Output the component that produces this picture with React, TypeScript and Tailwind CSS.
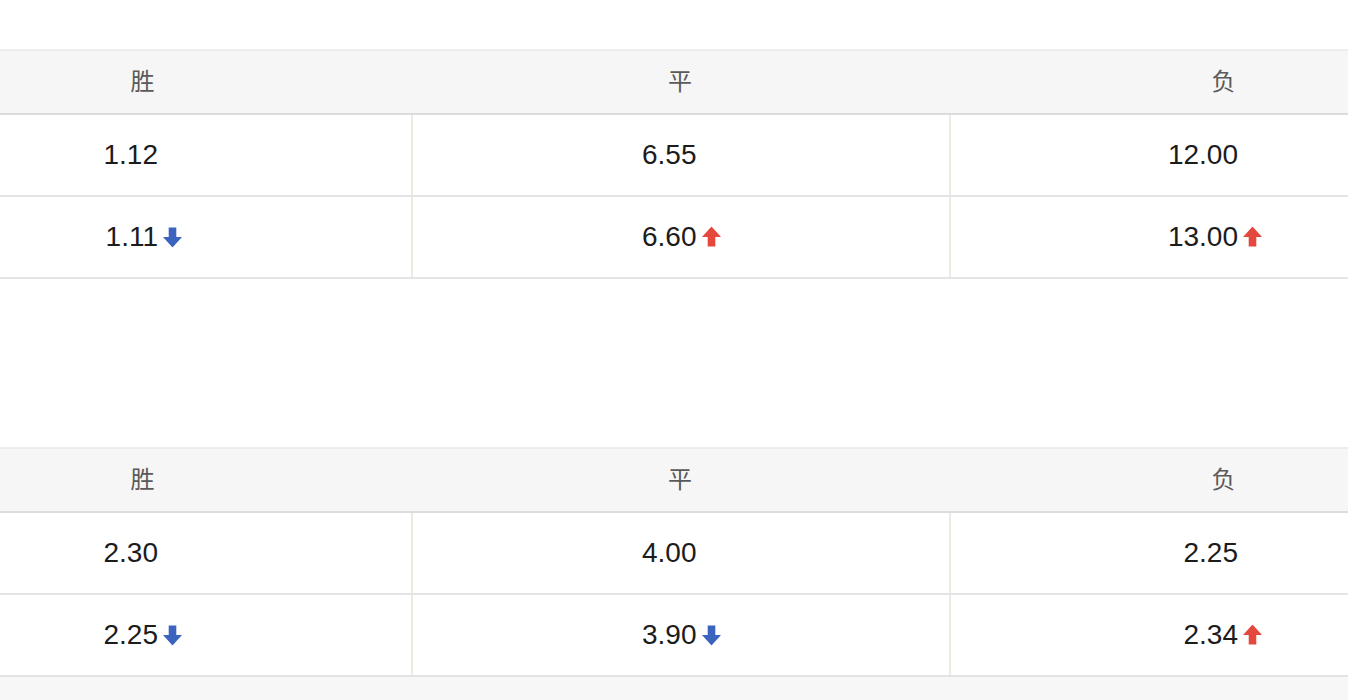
import React from 'react'

type Odds = { value: string; trend?: 'up' | 'down' }

const tables: { rows: Odds[][] }[] = [
  {
    rows: [
      [{ value: '1.12' }, { value: '6.55' }, { value: '12.00' }],
      [
        { value: '1.11', trend: 'down' },
        { value: '6.60', trend: 'up' },
        { value: '13.00', trend: 'up' },
      ],
    ],
  },
  {
    rows: [
      [{ value: '2.30' }, { value: '4.00' }, { value: '2.25' }],
      [
        { value: '2.25', trend: 'down' },
        { value: '3.90', trend: 'down' },
        { value: '2.34', trend: 'up' },
      ],
    ],
  },
]

const headers = ['胜', '平', '负']

function Arrow({ dir }: { dir: 'up' | 'down' }) {
  const color = dir === 'up' ? '#e5483c' : '#3c64bf'
  return (
    <svg
      width="19"
      height="21"
      viewBox="0 0 20 22"
      className="absolute left-full top-1/2 ml-[5px] -translate-y-1/2"
    >
      {dir === 'down' ? (
        <path d="M6 1h8v10h6l-10 11L0 11h6z" fill={color} />
      ) : (
        <path d="M6 21h8V11h6L10 0 0 11h6z" fill={color} />
      )}
    </svg>
  )
}

function Cell({ odds, first }: { odds: Odds; first: boolean }) {
  return (
    <div
      className={`flex h-[80px] items-center justify-center ${
        first ? '' : 'border-l-2 border-[#ecebe1]'
      }`}
    >
      <div className="relative flex w-[31px] justify-end whitespace-nowrap">
        <span className="text-[28px] leading-none text-[#1c1c1c]">{odds.value}</span>
        {odds.trend && <Arrow dir={odds.trend} />}
      </div>
    </div>
  )
}

function OddsTable({ rows }: { rows: Odds[][] }) {
  return (
    <div className="ml-[-126px] w-[1620px]">
      <div className="grid h-[66px] grid-cols-[537px_538px_545px] border-t-2 border-b-2 border-t-[#ededed] border-b-[#dcdcdc] bg-[#f6f6f6]">
        {headers.map((h, i) => (
          <div
            key={h}
            className={`flex items-center justify-center text-[24px] text-[#5a5a5a] ${i === 2 ? 'pl-[4px]' : ''}`}
          >
            {h}
          </div>
        ))}
      </div>
      {rows.map((row, r) => (
        <div
          key={r}
          className="grid grid-cols-[537px_538px_545px] border-b-2 border-[#e4e4e4]"
        >
          {row.map((o, i) => (
            <Cell key={i} odds={o} first={i === 0} />
          ))}
        </div>
      ))}
    </div>
  )
}

export default function App() {
  return (
    <div
      className="h-[700px] w-[1348px] overflow-hidden bg-white"
      style={{ fontFamily: '"Liberation Sans", "Noto Sans CJK SC", sans-serif' }}
    >
      <div className="h-[49px]" />
      <OddsTable rows={tables[0].rows} />
      <div className="h-[168px]" />
      <OddsTable rows={tables[1].rows} />
      <div className="h-[40px] bg-[#f7f7f7]" />
    </div>
  )
}
